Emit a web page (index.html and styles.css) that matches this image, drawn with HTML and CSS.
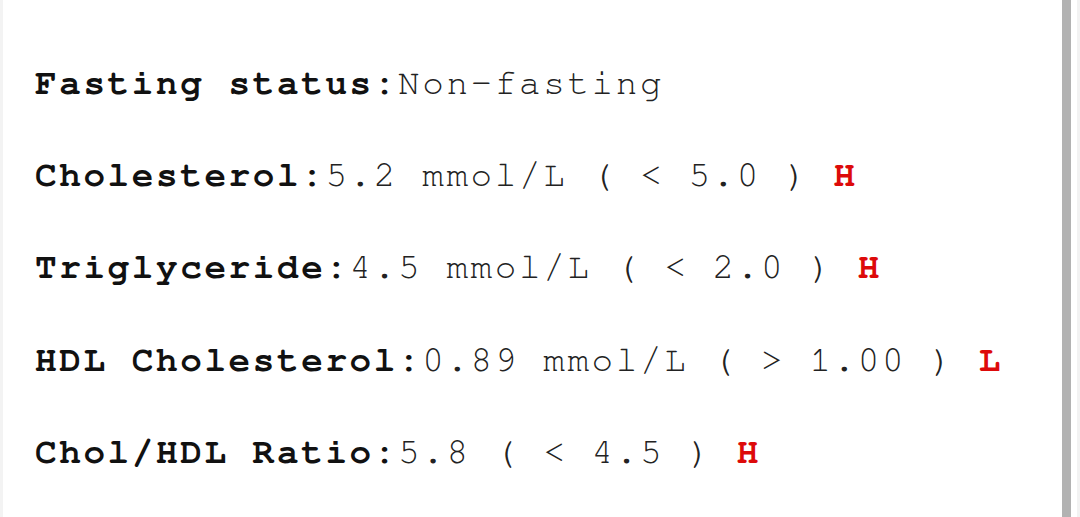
FILE: index.html
```html
<!DOCTYPE html>
<html>
<head>
<meta charset="utf-8">
<link rel="stylesheet" href="styles.css">
</head>
<body>
<div class="page">
  <div class="edge"></div>
  <main class="report">
    <div class="row"><span class="label">Fasting status:</span><span class="value">Non-fasting</span></div>
    <div class="row"><span class="label">Cholesterol:</span><span class="value">5.2 mmol/L ( &lt; 5.0 ) </span><span class="flag">H</span></div>
    <div class="row"><span class="label">Triglyceride:</span><span class="value">4.5 mmol/L ( &lt; 2.0 ) </span><span class="flag">H</span></div>
    <div class="row"><span class="label">HDL Cholesterol:</span><span class="value">0.89 mmol/L ( &gt; 1.00 ) </span><span class="flag">L</span></div>
    <div class="row"><span class="label">Chol/HDL Ratio:</span><span class="value">5.8 ( &lt; 4.5 ) </span><span class="flag">H</span></div>
  </main>
  <div class="scroll">
    <div class="thumb"></div>
    <div class="gutter"></div>
    <div class="rim"></div>
  </div>
</div>
</body>
</html>
```
FILE: styles.css
```css
html, body {
  margin: 0;
  padding: 0;
  background: #ffffff;
}
.page {
  display: flex;
  width: 1080px;
  height: 517px;
  overflow: hidden;
}
.edge {
  width: 3px;
  background: #f3f3f3;
}
.report {
  flex: 1;
  display: flex;
  flex-direction: column;
  gap: 52.2px;
  padding: 63px 0 0 32px;
  font-family: "Nimbus Mono PS", "Nimbus Mono L", "FreeMono", "Courier", "Liberation Mono", monospace;
  font-size: 36px;
  line-height: 40px;
  letter-spacing: 2.6px;
  color: #111111;
  white-space: pre;
}
.label {
  font-weight: bold;
}
.value {
  font-weight: normal;
  color: #222222;
}
.flag {
  font-weight: bold;
  color: #dd0a0a;
}
.scroll {
  display: flex;
}
.thumb {
  width: 9px;
  background: #b2b2b2;
}
.gutter {
  width: 6px;
  background: #ffffff;
}
.rim {
  width: 3px;
  background: #f2f2f2;
}
```
